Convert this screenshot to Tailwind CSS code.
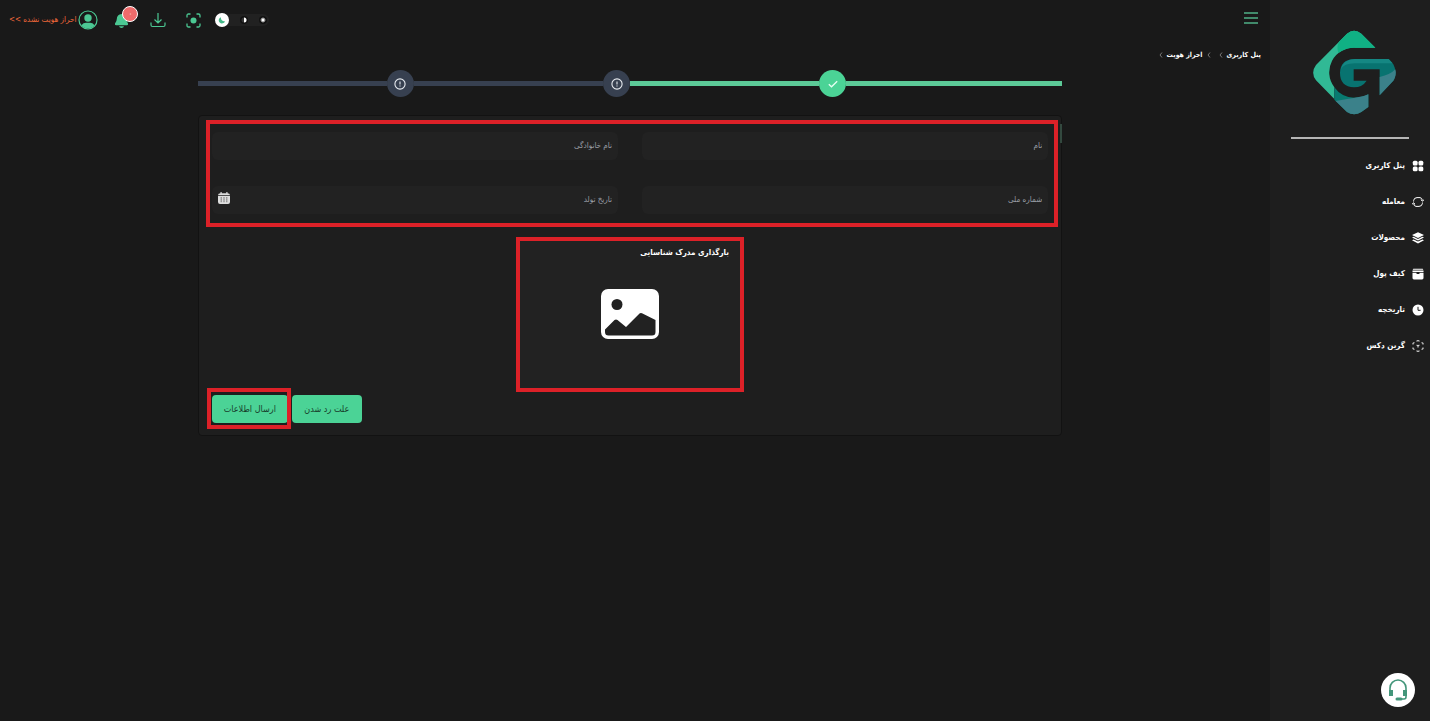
<!DOCTYPE html>
<html lang="fa" dir="rtl">
<head>
<meta charset="utf-8">
<meta name="viewport" content="width=device-width, initial-scale=1">
<title>احراز هویت</title>
<script src="https://cdn.jsdelivr.net/npm/@tailwindcss/browser@4"></script>
</head>
<body class="flex min-h-screen bg-[#191919] text-white font-['DejaVu_Sans_Condensed','DejaVu_Sans',sans-serif] text-[8px] leading-4">

<aside class="flex w-40 shrink-0 flex-col bg-[#1e1e1e] pt-[30px]">
  <a href="#" aria-label="صفحه اصلی" class="ml-2 self-center">
    <svg class="size-[85px]" viewBox="155 90 255 255">
      <path fill="#31b995" d="M345 143 303 101Q281 84 260 101L167 195Q150 218 167 241L222 297V262A74 74 0 0 1 285 143Z"/>
      <path fill="#10b184" d="M345 143 303 101Q281 84 260 101L236 125Q228 140 234 159 256 143 285 143Z"/>
      <path fill="#087a70" d="M222 262Q244 293 282 293 306 293 324 283V321L303 336Q281 350 260 336L222 299Z"/>
      <path fill="#3b818a" d="M226 303Q262 297 292 292 312 289 324 283V321L303 336Q281 350 260 336Z"/>
      <path fill="#087370" d="M284 177H385L399 193Q411 215 401 240L358 286V208H280V242H319Q306 262 281 262 239 260 239 219 240 177 284 177Z"/>
      <path fill="#158783" d="M284 177H385L397 190H284Q250 190 241 209 248 178 284 177Z"/>
      <path fill="#3b818a" d="M405 208Q410 225 399 242L358 286V231Q390 224 405 208Z"/>
    </svg>
  </a>
  <hr class="mx-[21px] mt-[22px] h-0.5 border-0 bg-[#b5b5b5]">
  <nav class="mt-[17px] font-bold">
    <ul class="flex flex-col gap-4 px-1.5">
      <li><a href="#" class="flex h-5 items-center gap-[7px]">
        <svg class="size-3" viewBox="0 0 12 12" fill="currentColor"><rect x=".8" y=".8" width="4.800" height="4.800" rx="1.500"/><rect x="6.500" y=".8" width="4.800" height="4.800" rx="1.500"/><rect x=".8" y="6.500" width="4.800" height="4.800" rx="1.500"/><rect x="6.500" y="6.500" width="4.800" height="4.800" rx="1.500"/></svg>
        <span>پنل کاربری</span></a></li>
      <li><a href="#" class="flex h-5 items-center gap-[7px]">
        <svg class="size-3" viewBox="0 0 12 12" fill="none" stroke="currentColor" stroke-width="1"><path d="M1.600 5.500V4.500Q2 1.700 5 1.600H8Q10 1.800 10.400 4.500M9 3.800l1.400 1.400L12 3.800M10.400 6.500v1Q10 10.300 7 10.400H4Q2 10.200 1.600 7.500M0 8.200l1.600-1.400L3 8.200"/></svg>
        <span>معامله</span></a></li>
      <li><a href="#" class="flex h-5 items-center gap-[7px]">
        <svg class="size-3" viewBox="0 0 12 12" fill="currentColor"><path d="M6 .2 12 3 6 5.900 0 3ZM1.600 4.700 6 6.900l4.400-2.200L12 5.500 6 8.500 0 5.500ZM1.600 7.400 6 9.600l4.400-2.200L12 8.200 6 11.400 0 8.200Z"/></svg>
        <span>محصولات</span></a></li>
      <li><a href="#" class="flex h-5 items-center gap-[7px]">
        <svg class="size-3" viewBox="0 0 12 12" fill="currentColor"><path d="M1.500.8h9q.7 0 .7.900H.8q0-.9.700-.9ZM.5 2.500h11V4H.5ZM.5 4.700H4.500v.7q0 .6.700.6h1.600q.7 0 .7-.6v-.7h4v5.300q0 1.400-1.400 1.400H1.900Q.5 11.400.5 10Z"/></svg>
        <span>کیف پول</span></a></li>
      <li><a href="#" class="flex h-5 items-center gap-[7px]">
        <svg class="size-3" viewBox="0 0 12 12"><circle cx="6" cy="6" r="5.500" fill="#fff"/><path d="M6 2.800V6.300H8.600" fill="none" stroke="#1e1e1e"/></svg>
        <span>تاریخچه</span></a></li>
      <li><a href="#" class="flex h-5 items-center gap-[7px]">
        <svg class="size-3" viewBox="0 0 12 12" fill="none" stroke="#ddd" stroke-width="1.100"><path d="M4.500 1.300 6 .6l1.500.7M9.600 2.400l1.400.8v1.200M11 7.600v1.200l-1.400.8M7.500 10.700 6 11.400l-1.500-.7M2.400 9.600 1 8.800V7.600M1 4.400V3.200l1.400-.8M4.600 5.100 6 5.900l1.400-.8M6 5.900V7.500"/></svg>
        <span>گرین دکس</span></a></li>
    </ul>
  </nav>
</aside>

<div class="flex min-w-0 flex-1 flex-col">
  <header class="flex h-10 items-center justify-between pr-3 pl-[9px]">
    <button type="button" aria-label="منو" class="mb-1 flex flex-col gap-[3px]">
      <span class="h-0.5 w-3.5 bg-[#418a6b]"></span><span class="h-0.5 w-3.5 bg-[#418a6b]"></span><span class="h-0.5 w-3.5 bg-[#418a6b]"></span>
    </button>
    <div class="flex items-center">
      <div class="flex h-3 w-[54px] items-center justify-between rounded-full bg-[#212121] pr-0.5" role="group" aria-label="پوسته">
        <button type="button" aria-label="روشن" class="flex size-2 items-center justify-center rounded-full bg-[#111]"><svg class="size-1.5" viewBox="0 0 6 6"><circle cx="3" cy="3" r="1.700" fill="#fff"/><path d="M3 0v6M0 3h6M1 1l4 4M5 1 1 5" stroke="#fff" stroke-width=".4"/></svg></button>
        <button type="button" aria-label="خودکار" class="flex size-2 items-center justify-center rounded-full bg-[#111]"><svg class="size-1.5" viewBox="0 0 6 6"><circle cx="3" cy="3" r="2.500" fill="#333"/><path d="M3 .5a2.500 2.500 0 0 1 0 5Z" fill="#fff"/></svg></button>
        <button type="button" aria-label="تیره" class="flex size-3.5 items-center justify-center rounded-full bg-white"><svg class="size-2" viewBox="0 0 8 8"><path d="M3 1.200A3.200 3.200 0 1 0 7 5.200 3.300 3.300 0 0 1 3 1.200Z" fill="#43b888"/></svg></button>
      </div>
      <button type="button" aria-label="اسکن" class="ml-5 mr-3.5"><svg class="size-[15px]" viewBox="0 0 15 15" fill="none" stroke="#4bc893" stroke-width="1.300"><path d="M1 4.500V2.500Q1 1 2.500 1h2M10.500 1h2Q14 1 14 2.500v2M14 10.500v2q0 1.500-1.500 1.500h-2M4.500 14h-2Q1 14 1 12.500v-2"/><circle cx="7.500" cy="7.500" r="3" fill="#4bc893" stroke="none"/></svg></button>
      <button type="button" aria-label="دانلود" class="ml-3"><svg class="size-4" viewBox="0 0 16 16" fill="none" stroke="#4bc893" stroke-width="1.200"><path d="M8 1v9.500M4.500 7.500 8 11l3.500-3.500M1 10.500V13q0 1.500 1.500 1.500h11Q15 14.500 15 13v-2.500"/></svg></button>
      <button type="button" aria-label="اعلان‌ها" class="relative ml-4 flex h-5 w-6 justify-end">
        <svg class="h-5 w-4" viewBox="0 0 16 20"><path d="M7.500 4Q3 4.500 2.800 9 2.700 11.500 1 13.500 .5 15 2 15.300H13Q14.500 15 14 13.500 12.300 11.500 12.300 9 12 4.500 7.500 4ZM5 16.300h5Q9.500 18 7.500 18T5 16.300Z" fill="#4bc893"/></svg>
        <span class="absolute -top-1 right-0 size-4 rounded-full border border-white bg-[#ee6b6b] text-center text-[7px] leading-[14px]">۰</span>
      </button>
      <button type="button" aria-label="حساب کاربری" class="ml-0.5"><svg class="size-5" viewBox="0 0 20 20"><circle cx="10" cy="10" r="9" fill="none" stroke="#4bc893" stroke-width="1.200"/><circle cx="10" cy="8" r="3.700" fill="#4bc893"/><path d="M3.300 15.200Q5.500 12.800 8 12.800h4q2.500 0 4.700 2.400Q14 18.500 10 18.500T3.300 15.200Z" fill="#4bc893"/></svg></button>
      <a href="#" class="text-[#f0683a]">احراز هویت نشده &gt;&gt;</a>
    </div>
  </header>

  <nav aria-label="مسیر" class="flex items-center gap-1 pr-[9px] pt-[7px] text-[7px] font-bold">
    <a href="#">پنل کاربری</a>
    <svg class="ml-1 h-1.5 w-1" viewBox="0 0 4 6" fill="none" stroke="#777"><path d="M3 .5 1 3l2 2.500"/></svg>
    <svg class="h-1.5 w-1" viewBox="0 0 4 6" fill="none" stroke="#777"><path d="M3 .5 1 3l2 2.500"/></svg>
    <a href="#">احراز هویت</a>
    <svg class="h-1.5 w-1" viewBox="0 0 4 6" fill="none" stroke="#777"><path d="M3 .5 1 3l2 2.500"/></svg>
  </nav>

  <main class="mt-[7px] flex flex-col items-center pr-2.5">
    <div class="w-[68.6%]">
      <ol class="flex items-center">
        <li class="h-[5px] flex-1 bg-[#5cc997]"></li>
        <li class="flex flex-1 items-center"><span class="flex size-[27px] items-center justify-center rounded-full bg-[#4bd396]"><svg class="size-3" viewBox="0 0 12 12" fill="none" stroke="#e6fff3" stroke-width="1.300"><path d="m1.800 6.300 2.700 2.500 5.700-5.500"/></svg></span><span class="h-[5px] flex-1 bg-[#5cc997]"></span></li>
        <li class="flex flex-1 items-center"><span class="flex size-[27px] items-center justify-center rounded-full bg-[#374050]"><svg class="size-3" viewBox="0 0 12 12" fill="none" stroke="#e8ebf0" stroke-width="1.100"><circle cx="6" cy="6" r="5.100"/><path d="M6 3.500v3M6 7.500v1"/></svg></span><span class="h-[5px] flex-1 bg-[#374050]"></span></li>
        <li class="flex flex-1 items-center"><span class="flex size-[27px] items-center justify-center rounded-full bg-[#374050]"><svg class="size-3" viewBox="0 0 12 12" fill="none" stroke="#e8ebf0" stroke-width="1.100"><circle cx="6" cy="6" r="5.100"/><path d="M6 3.500v3M6 7.500v1"/></svg></span><span class="h-[5px] flex-1 bg-[#374050]"></span></li>
      </ol>

      <form class="relative mt-[18px] rounded border border-[#121212] bg-[#1e1e1e] px-[13px] pt-4 pb-3">
        <span class="absolute -right-px top-2 h-[19px] w-0.5 bg-[#33493f]"></span>
        <div class="relative grid grid-cols-2 gap-x-6 gap-y-[26px]">
          <input type="text" aria-label="نام" placeholder="نام" class="block h-7 w-full rounded-md bg-[#222] px-1.5 pb-0.5 outline-none placeholder:text-[#9a9fa6]">
          <input type="text" aria-label="نام خانوادگی" placeholder="نام خانوادگی" class="block h-7 w-full rounded-md bg-[#222] px-1.5 pb-0.5 outline-none placeholder:text-[#9a9fa6]">
          <input type="text" aria-label="شماره ملی" placeholder="شماره ملی" class="block h-7 w-full rounded-md bg-[#222] px-1.5 pb-0.5 outline-none placeholder:text-[#9a9fa6]">
          <div class="flex h-7 items-center rounded-md bg-[#222] px-1.5">
            <input type="text" aria-label="تاریخ تولد" placeholder="تاریخ تولد" class="h-full min-w-0 flex-1 pb-0.5 outline-none placeholder:text-[#9a9fa6]">
            <button type="button" aria-label="تقویم"><svg class="mb-1 size-3" viewBox="0 0 12 12"><path d="M2.500 0h1.200v1.200h4.600V0h1.200v1.200Q12 1.300 12 3.200H0Q0 1.300 2.500 1.200ZM0 4h12v6q0 2-2 2H2q-2 0-2-2Z" fill="#ddd"/><path d="M3.200 5.200v5M6 5.200v5M8.800 5.200v5" stroke="#555" stroke-width=".9" stroke-dasharray="1.500 .5"/></svg></button>
          </div>
          <div class="pointer-events-none absolute -left-1.5 -right-[10px] -top-3 -bottom-[13px] border-4 border-[#dc2128]"></div>
        </div>

        <label class="mx-auto mt-[23px] flex h-[155px] w-[228px] cursor-pointer flex-col border-4 border-[#dc2128] bg-[#222] px-[11px] pt-1 font-bold">
          <span>بارگذاری مدرک شناسایی</span>
          <svg class="mt-[27px] h-13 w-[60px] self-center" viewBox="0 0 60 52"><rect x="1" y="1" width="58" height="50" rx="7" fill="#fff"/><circle cx="17" cy="16.500" r="5.500" fill="#222"/><path d="M5 41.500 14.500 32q1.500-1 3 0L26 39 39.500 25.500q1-1 2.500-.3L55.500 32V44q0 3.500-3.500 3.500H8.500Q5 47.500 5 44Z" fill="#222"/></svg>
          <input type="file" class="sr-only">
        </label>

        <div class="mt-[3px] flex justify-end gap-1 text-[9px] text-[#173d2b]">
          <button type="button" class="h-7 w-[70px] rounded bg-[#4bd396]">علت رد شدن</button>
          <span class="relative block">
            <button type="submit" class="h-7 w-19 rounded bg-[#4bd396]">ارسال اطلاعات</button>
            <span class="pointer-events-none absolute -left-[5px] -right-[3px] -top-[7px] -bottom-1.5 border-4 border-[#dc2128]"></span>
          </span>
        </div>
      </form>
    </div>
  </main>
</div>

<button type="button" aria-label="پشتیبانی" class="fixed bottom-3.5 right-[15px] flex size-[34px] items-center justify-center rounded-full bg-white">
  <svg class="size-6" viewBox="0 0 24 24" fill="none" stroke="#43967a" stroke-width="1.600"><path d="M4 13v-3a8 8 0 0 1 16 0v9q0 2-2 2H15"/><path d="M5 12v6M19 12v6" stroke-width="4"/><path d="M11 21h4" stroke-width="3" stroke-linecap="round"/></svg>
</button>
</body>
</html>
